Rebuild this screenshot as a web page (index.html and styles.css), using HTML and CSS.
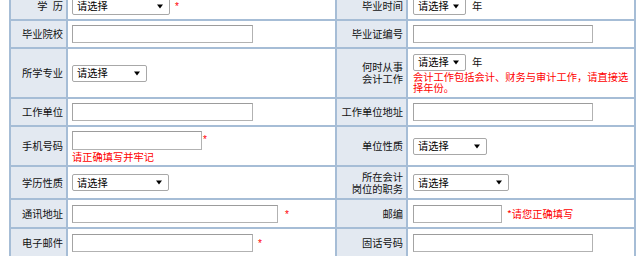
FILE: index.html
```html
<!DOCTYPE html>
<html lang="zh-CN">
<head>
<meta charset="utf-8">
<title>报名信息</title>
<link rel="stylesheet" href="styles.css">
</head>
<body>
<div class="form">
  <div class="lbl">学&ensp;历</div>
  <div class="val">
    <span class="sel w98"><span>请选择</span><svg class="arr" viewBox="0 0 6 4"><path d="M0 0H6L3 4Z"/></svg></span><span class="star s5">*</span>
  </div>
  <div class="lbl">毕业时间</div>
  <div class="val r">
    <span class="sel w53"><span>请选择</span><svg class="arr" viewBox="0 0 6 4"><path d="M0 0H6L3 4Z"/></svg></span><span class="unit">年</span>
  </div>

  <div class="lbl">毕业院校</div>
  <div class="val"><input class="txt w181" type="text"></div>
  <div class="lbl">毕业证编号</div>
  <div class="val r"><input class="txt w180" type="text"></div>

  <div class="lbl">所学专业</div>
  <div class="val">
    <span class="sel w75"><span>请选择</span><svg class="arr" viewBox="0 0 6 4"><path d="M0 0H6L3 4Z"/></svg></span>
  </div>
  <div class="lbl">何时从事<br>会计工作</div>
  <div class="val r stack">
    <div class="line">
      <span class="sel w53"><span>请选择</span><svg class="arr" viewBox="0 0 6 4"><path d="M0 0H6L3 4Z"/></svg></span><span class="unit">年</span>
    </div>
    <div class="note">会计工作包括会计、财务与审计工作，请直接选择年份。</div>
  </div>

  <div class="lbl">工作单位</div>
  <div class="val"><input class="txt w181" type="text"></div>
  <div class="lbl">工作单位地址</div>
  <div class="val r"><input class="txt w180" type="text"></div>

  <div class="lbl">手机号码</div>
  <div class="val stack">
    <div class="line"><input class="txt w130" type="text"><span class="star s1">*</span></div>
    <div class="note n1">请正确填写并牢记</div>
  </div>
  <div class="lbl">单位性质</div>
  <div class="val r">
    <span class="sel w74"><span>请选择</span><svg class="arr" viewBox="0 0 6 4"><path d="M0 0H6L3 4Z"/></svg></span>
  </div>

  <div class="lbl">学历性质</div>
  <div class="val">
    <span class="sel w97"><span>请选择</span><svg class="arr" viewBox="0 0 6 4"><path d="M0 0H6L3 4Z"/></svg></span>
  </div>
  <div class="lbl">所在会计<br>岗位的职务</div>
  <div class="val r">
    <span class="sel w96"><span>请选择</span><svg class="arr" viewBox="0 0 6 4"><path d="M0 0H6L3 4Z"/></svg></span>
  </div>

  <div class="lbl">通讯地址</div>
  <div class="val"><input class="txt w206" type="text"><span class="star s7">*</span></div>
  <div class="lbl">邮编</div>
  <div class="val r"><input class="txt w89" type="text"><span class="hint">*请您正确填写</span></div>

  <div class="lbl">电子邮件</div>
  <div class="val"><input class="txt w181" type="text"><span class="star s5">*</span></div>
  <div class="lbl">固话号码</div>
  <div class="val r"><input class="txt w180" type="text"></div>
</div>
</body>
</html>
```

FILE: styles.css
```css
html, body {
  margin: 0;
  padding: 0;
  background: #ffffff;
}

body {
  font-family: "Noto Sans CJK SC", "Noto Sans", sans-serif;
  font-size: 10.25px;
  color: #111111;
  overflow: hidden;
}

.form {
  display: grid;
  grid-template-columns: 55px 267px 69px 226px;
  grid-template-rows: 26px 26px 48px 26px 38px 31px 27px 27px;
  gap: 2px;
  padding: 2px;
  background: #a6bdd6;
  width: max-content;
  margin: -9px 0 0 9px;
}

.lbl {
  background: #e3e9f1;
  display: flex;
  align-items: center;
  justify-content: flex-end;
  text-align: right;
  padding-right: 3px;
  line-height: 12px;
}

.val {
  background: #ffffff;
  display: flex;
  align-items: center;
  padding-left: 4px;
  line-height: 12px;
}

.val.r {
  padding-left: 5px;
}

.val.stack {
  flex-direction: column;
  align-items: flex-start;
  justify-content: center;
  padding-right: 4px;
}

.line {
  display: flex;
  align-items: center;
}

.txt {
  box-sizing: border-box;
  height: 18px;
  margin: 0;
  padding: 0 3px;
  border: 1px solid #b2b2b2;
  border-top-color: #9c9c9c;
  border-left-color: #a4a4a4;
  background: #ffffff;
  font: inherit;
  outline: none;
}

.w89 { width: 89px; }
.w130 { width: 130px; height: 19px; }
.w180 { width: 180px; }
.w181 { width: 181px; }
.w206 { width: 206px; }

.sel {
  box-sizing: border-box;
  display: inline-flex;
  align-items: center;
  justify-content: space-between;
  height: 17px;
  padding: 0 6px 0 4px;
  border: 1px solid #a8a8a8;
  border-radius: 2px;
  background: #ffffff;
  color: #000000;
}

.arr {
  width: 6px;
  height: 5px;
  fill: #000000;
}

.w53 { width: 53px; }
.w74 { width: 74px; }
.w75 { width: 75px; }
.w96 { width: 96px; }
.w97 { width: 97px; }
.w98 { width: 98px; }

.unit {
  margin-left: 6px;
}

.star {
  color: #ff0000;
  font-family: "Liberation Sans", sans-serif;
  font-size: 10px;
}

.line .star {
  align-self: flex-start;
  margin-top: 3px;
}

.val > .star {
  align-self: center;
  position: relative;
  top: 1px;
}

.s1 { margin-left: 1px; }
.s5 { margin-left: 5px; }
.s7 { margin-left: 7px; }

.note {
  color: #ff0000;
  line-height: 11px;
}

.n1 {
  margin-top: 1px;
}

.hint {
  color: #ff0000;
  margin-left: 5px;
}
```
